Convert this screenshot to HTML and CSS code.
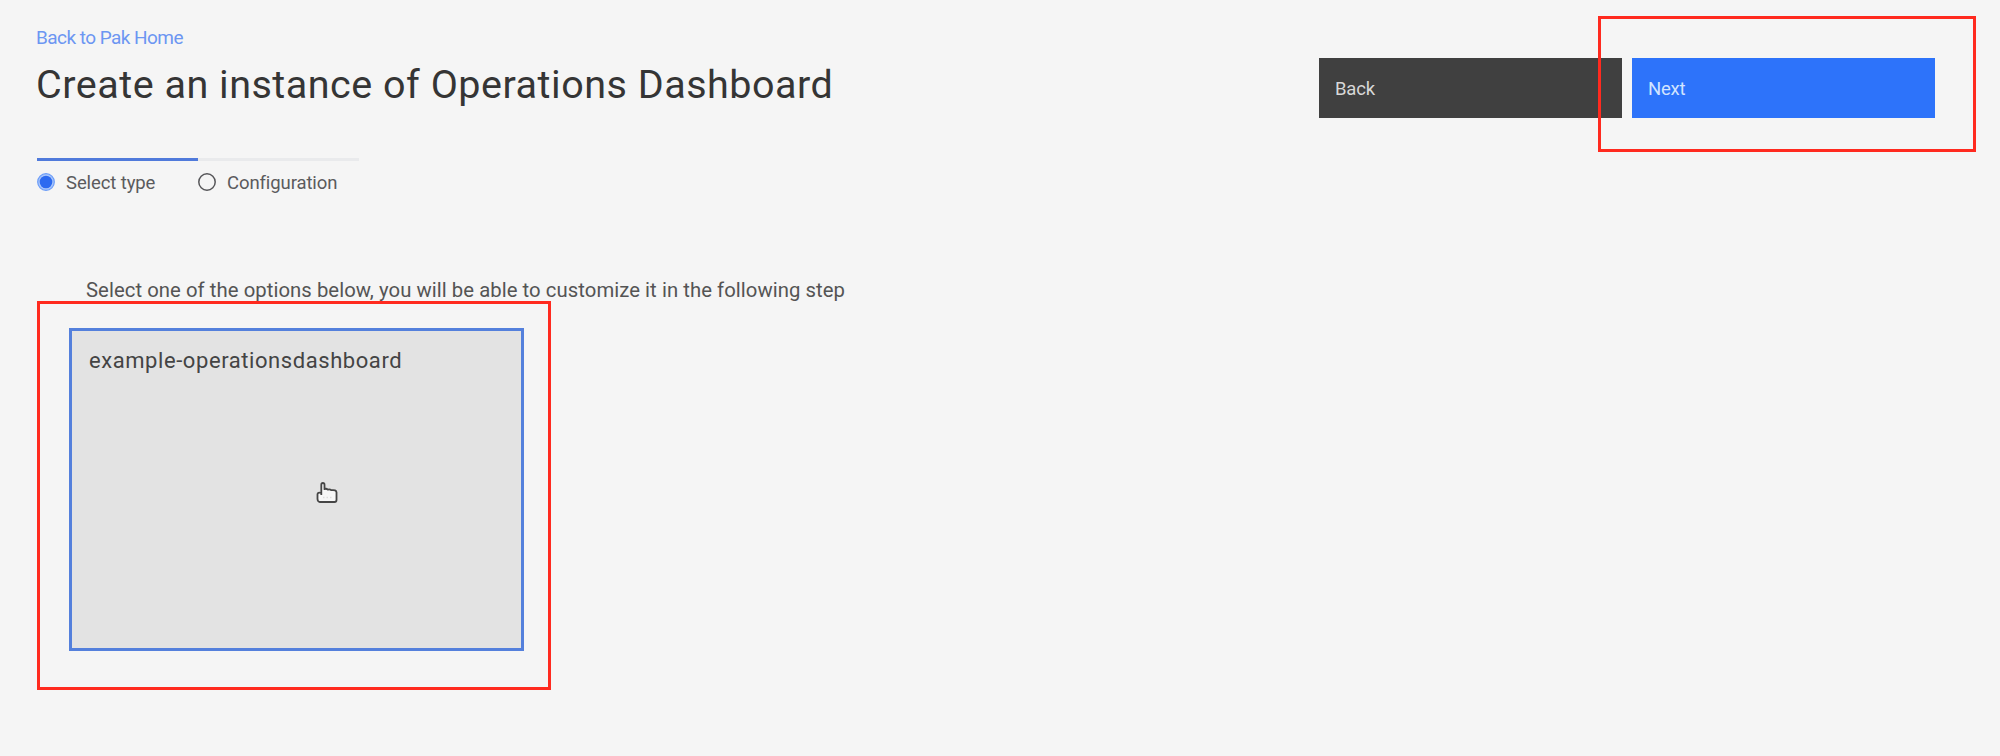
FILE: index.html
```
<!DOCTYPE html>
<html lang="en">
<head>
<meta charset="utf-8">
<title>Create an instance of Operations Dashboard</title>
<link rel="stylesheet" href="styles.css">
</head>
<body>
<main class="page">
  <header class="header">
    <div class="heading">
      <a class="back-link">Back to Pak Home</a>
      <h1 class="title">Create an instance of Operations Dashboard</h1>
    </div>
    <div class="actions">
      <button class="button button-secondary">Back</button>
      <button class="button button-primary">Next</button>
    </div>
  </header>
  <ol class="steps">
    <li class="step step-current">
      <svg class="step-icon" viewBox="0 0 18 18"><circle cx="9" cy="9" r="8.3" fill="#a9c6fb" stroke="#6b9cf8" stroke-width="1.2"/><circle cx="9" cy="9" r="6.3" fill="#2c6af0"/></svg>
      <span>Select type</span>
    </li>
    <li class="step">
      <svg class="step-icon" viewBox="0 0 18 18"><circle cx="9" cy="9" r="8.2" fill="none" stroke="#57575a" stroke-width="1.5"/></svg>
      <span>Configuration</span>
    </li>
  </ol>
  <p class="hint">Select one of the options below, you will be able to customize it in the following step</p>
  <section class="tile"><span class="tile-name">example-operationsdashboard</span></section>
</main>
<div class="highlight highlight-tile"></div>
<div class="highlight highlight-next"></div>
<svg class="pointer" viewBox="0 0 22 22"><path d="M5.3 13V2.8Q5.3 1 6.9 1Q8.5 1 8.5 2.8V7.2Q10.2 6.2 11.8 7.6Q13.8 6.8 15.2 8.2Q20.3 7.4 20.5 10.4V18Q20.5 20 18.5 20H3.8Q1.8 20 1.5 17V12.4Q1.6 10 5.3 11" fill="#f7f7f7" stroke="#454545" stroke-width="1.8" stroke-linejoin="round"/><path d="M7 15.5H16" stroke="#ddd" stroke-width="1.5" stroke-dasharray="1.5 2"/></svg>
</body>
</html>
```
FILE: styles.css
```
* { box-sizing: border-box; }
body { margin: 0; background: #f5f5f5; color: #393939; font-family: Roboto, sans-serif; }
.page { height: 756px; padding: 26px 65px 0 36px; overflow: hidden; }
.header { display: flex; justify-content: space-between; height: 132px; }
.heading { display: flex; flex-direction: column; white-space: nowrap; }
.back-link { font-size: 19px; line-height: 24px; letter-spacing: -0.55px; color: #6c96f2; }
.title { margin: 9px 0 0; font-size: 39.5px; line-height: 52px; font-weight: 400; letter-spacing: 0.51px; color: #353535; }
.actions { display: flex; gap: 10px; margin-top: 32px; }
.button { width: 303px; height: 60px; padding: 2px 16px 0; border: 0; border-radius: 0; font: 18.5px/24px Roboto, sans-serif; letter-spacing: -0.2px; text-align: left; }
.button-secondary { background: #404040; color: #d8d8d8; }
.button-primary { background: #2d73fa; color: #d2e4ff; }
.steps { display: flex; margin: 0 0 0 1px; padding: 0; list-style: none; }
.step { display: flex; gap: 11px; width: 161px; height: 40px; padding-top: 12px; border-top: 3px solid #e9eaec; font-size: 18.5px; line-height: 20px; letter-spacing: -0.1px; color: #5b5b5d; white-space: nowrap; }
.step-current { border-top-color: #507adb; }
.step-icon { width: 18px; height: 18px; flex: none; }
.hint { margin: 78px 0 0 50px; font-size: 20.3px; line-height: 28px; letter-spacing: 0.06px; color: #545454; white-space: nowrap; }
.tile { width: 455px; height: 323px; margin: 24px 0 0 33px; padding: 18px 17px; border: 3px solid #5480dc; background: #e3e3e3; }
.tile-name { font-size: 22px; line-height: 24px; letter-spacing: 0.57px; color: #444; }
.highlight { position: absolute; border: 3px solid #ff2a1f; }
.highlight-tile { left: 37px; top: 301px; width: 514px; height: 389px; }
.highlight-next { left: 1598px; top: 16px; width: 378px; height: 136px; }
.pointer { position: absolute; left: 316px; top: 482px; width: 22px; height: 22px; }
```
